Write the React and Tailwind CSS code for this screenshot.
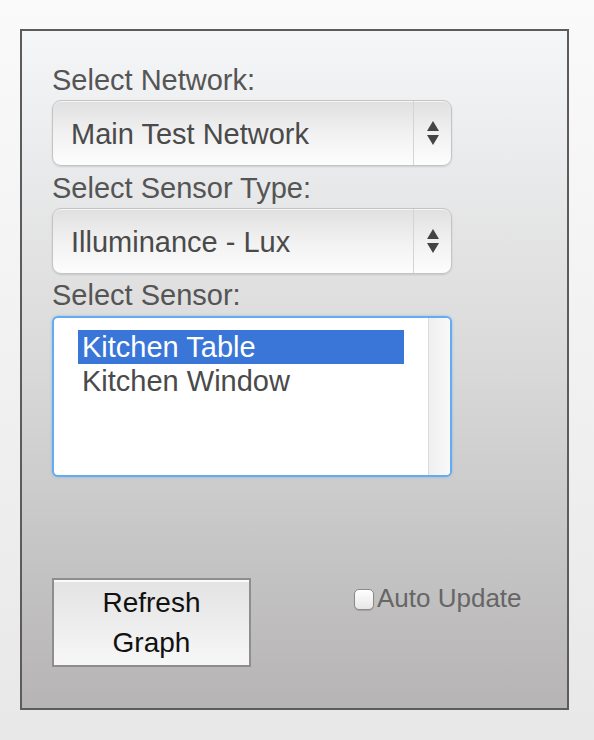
import { useState } from 'react';

const font = { fontFamily: '"Liberation Sans", Arial, Helvetica, sans-serif' };

const SelectBox = ({ value }) => (
  <div className="flex h-[66px] w-[400px] rounded-[9px] border border-[#c4c4c4] bg-linear-to-b from-[#e0e0e0] via-[#f1f1f1] to-[#fdfdfd] shadow-[0_1px_2px_rgba(0,0,0,0.12),inset_0_1px_0_rgba(255,255,255,0.7)]">
    <div className="flex flex-1 items-center pl-[18px] pt-[2px] text-[29px] leading-[32px] text-[#4a4a4a]">
      {value}
    </div>
    <div className="flex w-[38px] flex-col items-center justify-center gap-[4px] border-l border-[#d4d4d4]">
      <svg width="12" height="10" viewBox="0 0 12 10">
        <polygon points="6,0 12,10 0,10" fill="#444" />
      </svg>
      <svg width="12" height="10" viewBox="0 0 12 10">
        <polygon points="0,0 12,0 6,10" fill="#444" />
      </svg>
    </div>
  </div>
);

const Label = ({ children, className }) => (
  <div className={`text-[29px] leading-[32px] text-[#555] ${className}`}>{children}</div>
);

export default function App() {
  const sensors = ['Kitchen Table', 'Kitchen Window'];
  const [selected, setSelected] = useState(0);
  const [auto, setAuto] = useState(false);

  return (
    <div className="min-h-[740px] bg-linear-to-b from-[#fafafa] to-[#e8e8e8] pt-[29px] pl-[20px]" style={font}>
      <div className="h-[681px] w-[549px] border-2 border-[#5c5c5c] bg-linear-to-b from-[#f5f6f8] via-[#d9d9d9] to-[#b6b4b4] pl-[30px] pt-[33px]">
        <Label className="mb-[4px]">Select Network:</Label>
        <SelectBox value="Main Test Network" />

        <Label className="mt-[6px] mb-[4px]">Select Sensor Type:</Label>
        <SelectBox value="Illuminance - Lux" />

        <Label className="mt-[5px] mb-[5px]">Select Sensor:</Label>
        <div className="flex h-[161px] w-[400px] overflow-hidden rounded-[6px] border-2 border-[#62acef] bg-white shadow-[0_0_3px_rgba(98,172,239,0.6)]">
          <div className="flex-1 px-[24px] pt-[12px]">
            {sensors.map((s, i) => (
              <div
                key={s}
                onClick={() => setSelected(i)}
                className={`h-[34px] pl-[4px] text-[29px] leading-[34px] ${
                  selected === i ? 'bg-[#3a76d8] text-white' : 'text-[#4a4a4a]'
                }`}
              >
                {s}
              </div>
            ))}
          </div>
          <div className="w-[22px] border-l border-[#dcdcdc] bg-linear-to-r from-[#efefef] to-[#f9f9f9]" />
        </div>

        <div className="mt-[101px] flex items-start">
          <button className="flex h-[89px] w-[199px] flex-col items-center justify-center border-2 border-[#8e8e8e] bg-linear-to-b from-[#e3e3e3] to-[#f7f7f7] pt-[1px] text-[28px] leading-[40px] text-[#111] shadow-[inset_0_2px_0_rgba(255,255,255,0.8)]">
            <span>Refresh</span>
            <span>Graph</span>
          </button>
          <label className="ml-[103px] mt-[5px] flex cursor-pointer items-start" onClick={() => setAuto(!auto)}>
            <span className="mt-[6px] flex h-[21px] w-[20px] items-center justify-center rounded-[5px] border border-[#8a8a8a] bg-linear-to-b from-[#ffffff] to-[#e6e6e6] shadow-[0_1px_1px_rgba(0,0,0,0.15)] text-[14px] leading-none text-[#333]">
              {auto ? '✓' : ''}
            </span>
            <span className="ml-[3px] text-[26px] leading-[30px] text-[#666]">Auto Update</span>
          </label>
        </div>
      </div>
    </div>
  );
}
